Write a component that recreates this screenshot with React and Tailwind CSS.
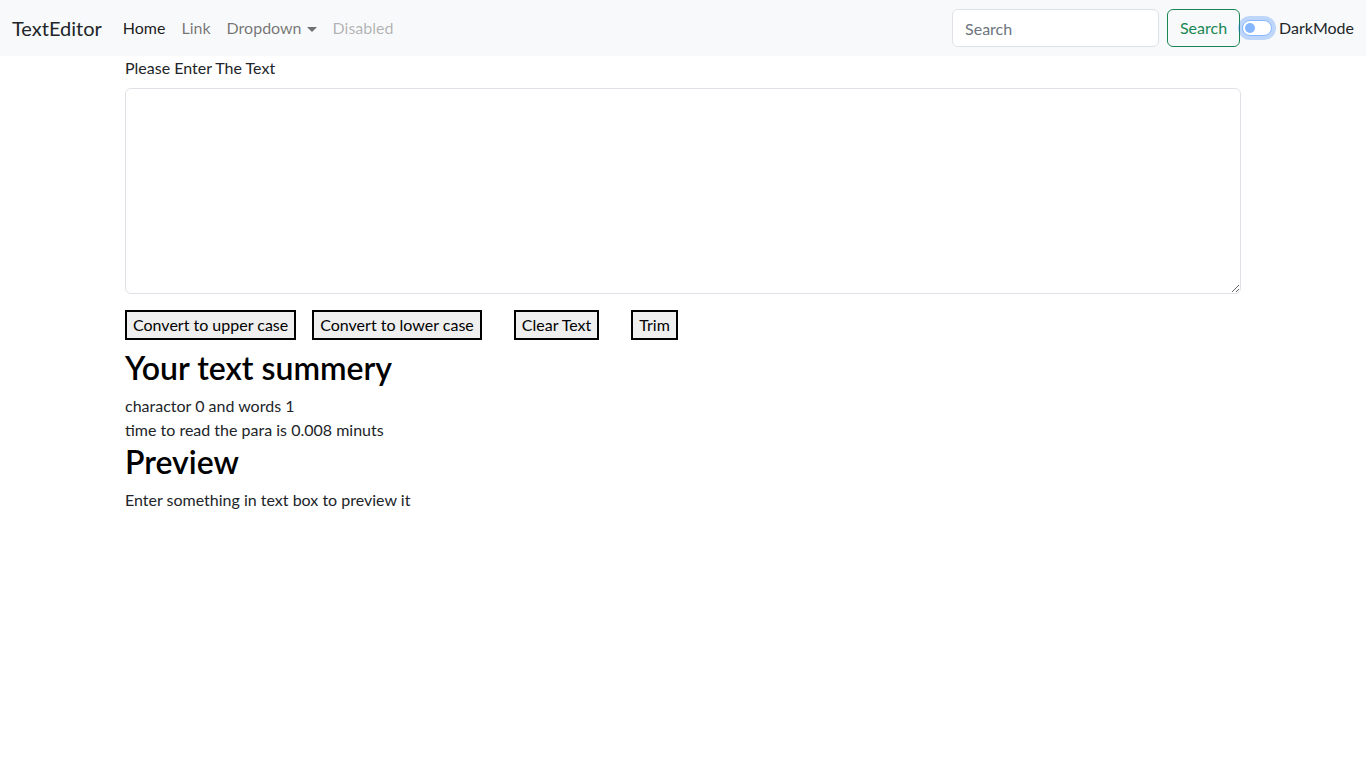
import React, { useState } from 'react';

const Navbar = () => {
  return (
    <nav className="h-14 bg-[#f8f9fa] flex items-center justify-between px-3">
      <div className="flex items-center">
        <span className="text-[20px] text-[#212529] mr-[13px] leading-[30px]">TextEditor</span>
        <ul className="flex items-center text-[16px]">
          <li className="px-2 text-black/90">Home</li>
          <li className="px-2 text-black/55">Link</li>
          <li className="px-2 text-black/55 flex items-center">
            Dropdown
            <span className="inline-block ml-[5px] mt-[2px] w-0 h-0 border-t-[5px] border-t-current border-x-[5px] border-x-transparent"></span>
          </li>
          <li className="px-2 text-black/30">Disabled</li>
        </ul>
      </div>
      <div className="flex items-center">
        <input
          type="search"
          placeholder="Search"
          className="w-[207px] h-[38px] px-3 bg-white border border-[#dee2e6] rounded-[6px] text-[16px] text-[#212529] placeholder:text-[#6c757d] outline-none"
        />
        <button className="ml-2 h-[38px] w-[73px] border border-[#198754] rounded-[6px] text-[#198754] text-[16px]">
          Search
        </button>
        <div className="ml-[2px] w-[30px] h-[16px] rounded-full bg-white border border-[#86b7fe] shadow-[0_0_0_4px_rgba(13,110,253,0.25)] flex items-center pl-[2px]">
          <span className="w-[10px] h-[10px] rounded-full bg-[#86b7fe]"></span>
        </div>
        <span className="ml-[7px] text-[16px] text-[#212529]">DarkMode</span>
      </div>
    </nav>
  );
};

const TextForm = () => {
  const [text, setText] = useState('');
  const words = text.split(' ').length;

  const btn = 'bg-[#efefef] border-2 border-black px-[6px] text-[16px] leading-[26px] text-black';

  return (
    <div className="w-[1116px] mx-auto text-[#212529]">
      <label className="block text-[16px] leading-6">Please Enter The Text</label>
      <textarea
        rows={8}
        value={text}
        onChange={(e) => setText(e.target.value)}
        className="mt-2 block w-full h-[206px] px-3 py-[6px] border border-[#dee2e6] rounded-[6px] bg-white outline-none text-[16px]"
      />
      <div className="mt-[16px] flex items-center">
        <button className={btn}>Convert to upper case</button>
        <button className={`${btn} ml-4`}>Convert to lower case</button>
        <button className={`${btn} ml-8`}>Clear Text</button>
        <button className={`${btn} ml-8`}>Trim</button>
      </div>
      <h2 className="mt-[9px] text-[32px] leading-[38px] font-semibold text-black">Your text summery</h2>
      <p className="mt-[7px] text-[16px] leading-6">charactor {text.length} and words {words}</p>
      <p className="text-[16px] leading-6">time to read the para is {0.008 * words} minuts</p>
      <h2 className="mt-[1px] text-[32px] leading-[38px] font-semibold text-black">Preview</h2>
      <p className="mt-[7px] text-[16px] leading-6">
        {text.length > 0 ? text : 'Enter something in text box to preview it'}
      </p>
    </div>
  );
};

export default function App() {
  return (
    <div className="min-h-screen bg-white font-['Lato','Liberation_Sans',sans-serif]">
      <Navbar />
      <TextForm />
    </div>
  );
}
